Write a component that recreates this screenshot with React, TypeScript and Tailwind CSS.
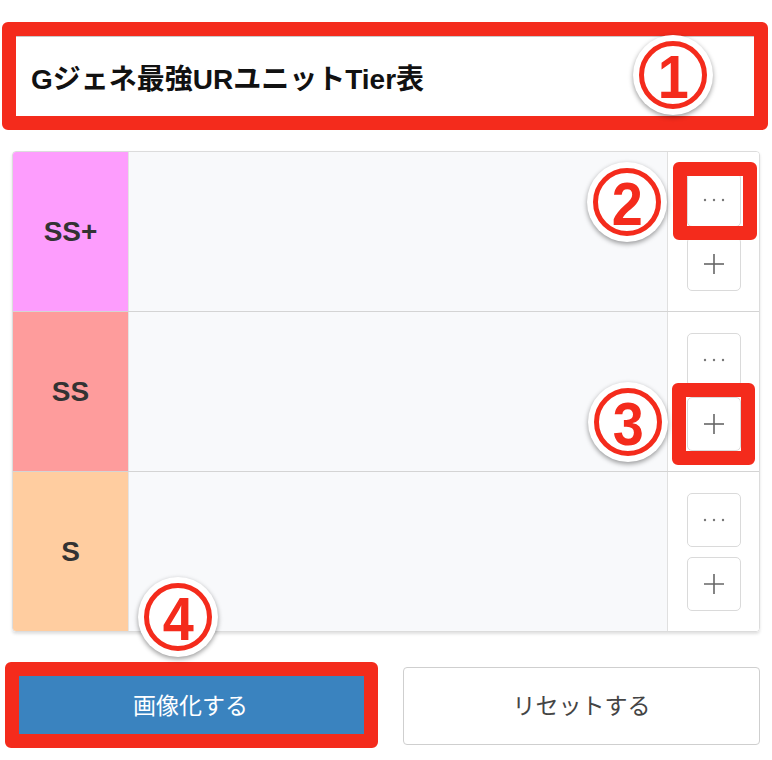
import React from "react";

const FONT = { fontFamily: '"Liberation Sans", "Noto Sans CJK JP", sans-serif' };

function Badge({ n, x, y }: { n: string; x: number; y: number }) {
  return (
    <div
      className="absolute w-[80px] h-[80px] rounded-full bg-white flex items-center justify-center shadow-[0_2px_5px_rgba(0,0,0,0.4)]"
      style={{ left: x - 40, top: y - 40 }}
    >
      <div className="w-[68px] h-[68px] rounded-full border-[5px] border-[#f42b1c] flex items-center justify-center">
        <span className="text-[62px] font-bold leading-none text-[#f42b1c] mt-[3px] scale-x-90" style={FONT}>
          {n}
        </span>
      </div>
    </div>
  );
}

function RedBox({ x, y, w, h }: { x: number; y: number; w: number; h: number }) {
  return (
    <div
      className="absolute border-[14px] border-[#f42b1c] rounded-[6px]"
      style={{ left: x, top: y, width: w, height: h }}
    />
  );
}

function Dots() {
  return (
    <svg width="22" height="4" viewBox="0 0 22 4">
      <circle cx="2" cy="2" r="1.2" fill="#777" />
      <circle cx="11" cy="2" r="1.2" fill="#777" />
      <circle cx="20" cy="2" r="1.2" fill="#777" />
    </svg>
  );
}

function Plus() {
  return (
    <svg width="20" height="20" viewBox="0 0 20 20">
      <line x1="10" y1="0" x2="10" y2="20" stroke="#666" strokeWidth="1.6" />
      <line x1="0" y1="10" x2="20" y2="10" stroke="#666" strokeWidth="1.6" />
    </svg>
  );
}

const tiers = [
  { label: "SS+", color: "bg-[#fd9dfd]" },
  { label: "SS", color: "bg-[#fe9c9c]" },
  { label: "S", color: "bg-[#ffcda0]" },
];

export default function App() {
  return (
    <div className="relative w-[772px] h-[760px] bg-white overflow-hidden" style={FONT}>
      <div className="px-3 pt-[36px]">
        <div className="h-[82px] border border-[#c8c8c8] rounded-[3px] bg-white flex items-center pl-[18px] pt-[5px]">
          <span className="text-[28px] font-bold text-[#111]">Gジェネ最強URユニットTier表</span>
        </div>

        <div className="mt-[33px] border border-[#dcdcdc] rounded-[4px] shadow-[0_2px_3px_rgba(0,0,0,0.12)] overflow-hidden">
          {tiers.map((t, i) => (
            <div
              key={t.label}
              className={`flex h-[159px] ${i < tiers.length - 1 ? "border-b border-[#d4d4d4] h-[160px]" : ""}`}
            >
              <div
                className={`w-[115px] ${t.color} flex items-center justify-center text-[28px] font-bold text-[#333]`}
              >
                {t.label}
              </div>
              <div className="flex-1 bg-[#f8f9fb] border-l border-[#e4e4e4]" />
              <div className="w-[92px] bg-white border-l border-[#e0e0e0] flex flex-col items-center justify-center gap-[10px]">
                <button className="w-[54px] h-[54px] rounded-[5px] border border-[#dadada] bg-white flex items-center justify-center">
                  <Dots />
                </button>
                <button className="w-[54px] h-[54px] rounded-[5px] border border-[#dadada] bg-white flex items-center justify-center">
                  <Plus />
                </button>
              </div>
            </div>
          ))}
        </div>

        <div className="mt-[35px] grid grid-cols-2 gap-[34px]">
          <button className="h-[78px] rounded-[4px] bg-[#3a83bf] text-white text-[23px] flex items-center justify-center">
            画像化する
          </button>
          <button className="h-[78px] rounded-[4px] bg-white border border-[#cfcfcf] text-[#444] text-[23px] flex items-center justify-center">
            リセットする
          </button>
        </div>
      </div>

      <RedBox x={2} y={22} w={766} h={108} />
      <RedBox x={673} y={162} w={84} h={78} />
      <RedBox x={672} y={383} w={83} h={82} />
      <RedBox x={5} y={662} w={373} h={86} />

      <Badge n="1" x={673} y={75} />
      <Badge n="2" x={627} y={202} />
      <Badge n="3" x={628} y={422} />
      <Badge n="4" x={178} y={617} />
    </div>
  );
}
